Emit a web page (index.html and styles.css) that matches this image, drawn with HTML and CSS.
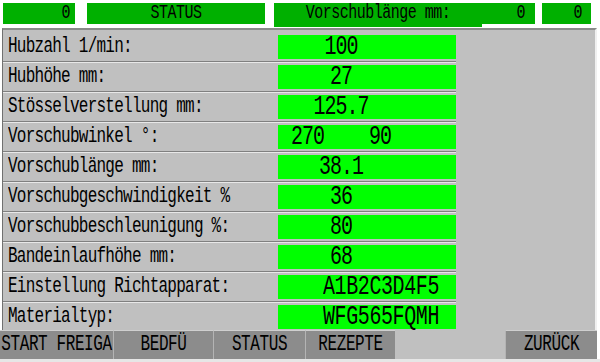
FILE: index.html
```html
<!DOCTYPE HTML>
<html>
<head>
<title>Einstellungen</title>
<link rel="stylesheet" href="styles.css">
</head>
<body>
<div class="screen">
	<div class="topbar">
		<div class="tb num w1"><span class="t">0</span></div>
		<div class="tb mid w2"><span class="t">STATUS</span></div>
		<div class="tb mid w3"><span class="t">Vorschublänge mm:</span></div>
		<div class="tb num w4"><span class="t">0</span></div>
		<div class="tb num w5"><span class="t">0</span></div>
	</div>
	<div class="panel">
		<div class="row"><span class="label"><span class="t">Hubzahl 1/min:</span></span><div class="val"><span class="t">100</span></div></div>
		<div class="row"><span class="label"><span class="t">Hubhöhe mm:</span></span><div class="val"><span class="t">27</span></div></div>
		<div class="row"><span class="label"><span class="t">Stösselverstellung mm:</span></span><div class="val"><span class="t">125.7</span></div></div>
		<div class="row"><span class="label"><span class="t">Vorschubwinkel °:</span></span><div class="val pair"><span class="t">270</span><span class="t">90</span></div></div>
		<div class="row"><span class="label"><span class="t">Vorschublänge mm:</span></span><div class="val"><span class="t">38.1</span></div></div>
		<div class="row"><span class="label"><span class="t">Vorschubgeschwindigkeit %</span></span><div class="val"><span class="t">36</span></div></div>
		<div class="row"><span class="label"><span class="t">Vorschubbeschleunigung %:</span></span><div class="val"><span class="t">80</span></div></div>
		<div class="row"><span class="label"><span class="t">Bandeinlaufhöhe mm:</span></span><div class="val"><span class="t">68</span></div></div>
		<div class="row"><span class="label"><span class="t">Einstellung Richtapparat:</span></span><div class="val code"><span class="t">A1B2C3D4F5</span></div></div>
		<div class="row last"><span class="label"><span class="t">Materialtyp:</span></span><div class="val code"><span class="t">WFG565FQMH</span></div></div>
	</div>
	<div class="buttons">
		<div class="btn b1"><span class="t">START FREIGA</span></div>
		<div class="btn b2"><span class="t">BEDFÜ</span></div>
		<div class="btn b3"><span class="t">STATUS</span></div>
		<div class="btn b4"><span class="t">REZEPTE</span></div>
		<div class="gap"></div>
		<div class="btn b5"><span class="t">ZURÜCK</span></div>
	</div>
</div>
</body>
</html>
```

FILE: styles.css
```css
*{
	box-sizing: border-box;
}
body{
	margin: 0;
	background: #ffffff;
	font-family: "Liberation Mono", monospace;
	color: #000000;
}
.screen{
	width: 600px;
	height: 362px;
	overflow: hidden;
	background: #ffffff;
}
.t{
	display: inline-block;
	transform: scaleY(1.35);
}
.topbar{
	display: flex;
	align-items: flex-start;
	height: 28px;
	padding: 3px 0px 0px 3px;
}
.tb{
	height: 21px;
	background: #00b000;
	font-size: 15px;
	line-height: 21px;
	letter-spacing: -0.5px;
	white-space: nowrap;
}
.tb.num{
	text-align: right;
}
.tb.mid{
	text-align: center;
}
.w1{
	width: 72px;
	padding-right: 5px;
	margin-right: 12px;
}
.w2{
	width: 178px;
	margin-right: 9px;
}
.w3{
	width: 208px;
	height: 24px;
}
.w4{
	width: 53px;
	padding-right: 10px;
	margin-right: 7px;
}
.w5{
	width: 49px;
	padding-right: 9px;
}
.panel{
	width: 595px;
	height: 302px;
	margin-left: 2px;
	padding-top: 2px;
	background: #c0c0c0;
	border-top: 2px solid #8a8a8a;
	border-left: 1px solid #707070;
	border-right: 2px solid #f0f0f0;
}
.row{
	display: grid;
	grid-template-columns: 270px 178px;
	width: 453px;
	height: 30px;
	padding: 3px 0px 2px 5px;
	border-bottom: 1px solid #808080;
	box-shadow: 0px 1px 0px #e8e8e8;
}
.row.last{
	height: 28px;
	border-bottom: 0;
	box-shadow: none;
}
.label{
	font-size: 16px;
	line-height: 24px;
	letter-spacing: -0.75px;
	white-space: nowrap;
}
.val{
	height: 24px;
	background: #00ff00;
	font-size: 20px;
	line-height: 24px;
	letter-spacing: -1px;
	text-align: center;
	padding-right: 52px;
	white-space: nowrap;
}
.val.pair{
	display: flex;
	justify-content: center;
	gap: 45px;
}
.val.code{
	text-align: left;
	padding-left: 45px;
	padding-right: 0px;
	letter-spacing: -0.4px;
}
.buttons{
	display: flex;
	height: 32px;
	border-bottom: 3px solid #e6e6e6;
}
.btn{
	height: 29px;
	background: #8c8c8c;
	border-top: 1px solid #cfcfcf;
	border-left: 1px solid #b4b4b4;
	font-size: 16px;
	line-height: 28px;
	letter-spacing: -0.4px;
	text-align: center;
	white-space: nowrap;
	overflow: hidden;
}
.b1{
	width: 113px;
	border-left: 0;
}
.b2{
	width: 100px;
}
.b3{
	width: 92px;
}
.b4{
	width: 90px;
}
.gap{
	width: 110px;
	height: 29px;
	background: #c0c0c0;
}
.b5{
	width: 92px;
}
```
